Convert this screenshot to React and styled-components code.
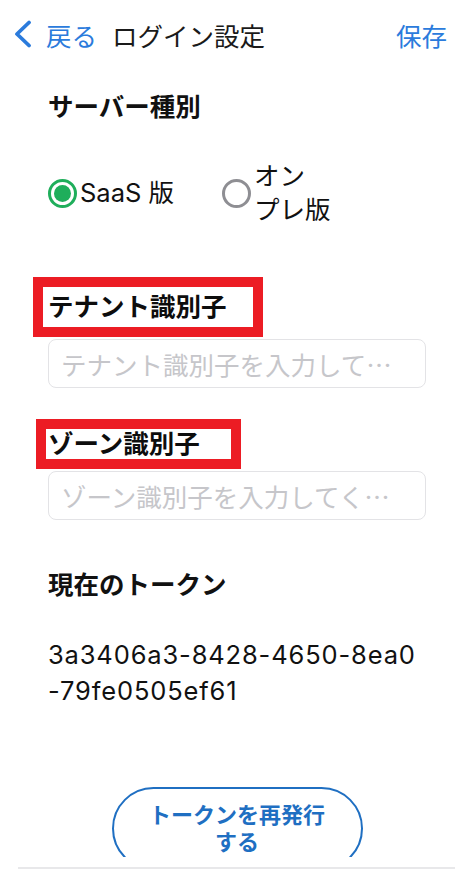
import React from "react";
import styled, { createGlobalStyle } from "styled-components";

const GlobalStyle = createGlobalStyle`
  html, body {
    margin: 0;
    padding: 0;
    background: #ffffff;
  }
  body {
    font-family: Inter, "Noto Sans CJK JP", sans-serif;
    color: #111111;
  }
  * {
    box-sizing: border-box;
  }
`;

const Page = styled.div`
  width: 473px;
  height: 882px;
  display: flex;
  flex-direction: column;
  overflow: hidden;
  background: #ffffff;
`;

const Header = styled.header`
  height: 68px;
  flex: none;
  display: flex;
  align-items: center;
  padding: 0 26px 0 12px;
  font-size: 25.5px;
`;

const BackButton = styled.button`
  display: flex;
  align-items: center;
  gap: 12px;
  padding: 0;
  border: none;
  background: none;
  font: inherit;
  color: #2b7bdc;
  cursor: pointer;
`;

const Title = styled.h1`
  margin: 0 0 0 15px;
  font-size: inherit;
  font-weight: 400;
  color: #1a1a1a;
  flex: 1;
`;

const SaveButton = styled.button`
  padding: 0;
  border: none;
  background: none;
  font: inherit;
  color: #2b7bdc;
  cursor: pointer;
`;

const Content = styled.main`
  flex: none;
  height: 789px;
  overflow: hidden;
  padding: 22px 47px 0 48px;
  display: flex;
  flex-direction: column;
  & > * {
    flex-shrink: 0;
  }
`;

const SectionTitle = styled.h2`
  margin: ${(p) => p.$top || 0}px 0 0;
  font-size: 25.5px;
  line-height: 34px;
  font-weight: 700;
  color: #111111;
`;

const Marked = styled.div`
  align-self: flex-start;
  margin: ${(p) => p.$top}px 0 0 ${(p) => p.$shiftLeft}px;
  padding: ${(p) => p.$padY}px ${(p) => p.$padRight}px ${(p) => p.$padY}px
    ${(p) => p.$padLeft}px;
  border: 10px solid #ec1c24;
  display: flex;
`;

const FieldLabel = styled.label`
  font-size: 25.5px;
  line-height: 30px;
  font-weight: 700;
  color: #0d0d0d;
  white-space: nowrap;
`;

const TextInput = styled.input`
  margin-top: 2px;
  width: 378px;
  height: 49px;
  padding: 0 12px;
  border: 1.5px solid #e3e3e6;
  border-radius: 8px;
  font-family: "Noto Sans CJK JP", sans-serif;
  font-size: 25.5px;
  color: #111111;
  outline: none;
  &::placeholder {
    color: #c6c6ca;
  }
`;

const RadioRow = styled.div`
  margin-top: 35px;
  display: flex;
  align-items: center;
  gap: 48px;
  height: 68px;
`;

const RadioOption = styled.div`
  display: flex;
  align-items: center;
  gap: 3px;
`;

const RadioCircle = styled.span`
  width: 29px;
  height: 29px;
  border-radius: 50%;
  border: 3px solid ${(p) => (p.$checked ? "#1fae5b" : "#8e8e93")};
  display: flex;
  align-items: center;
  justify-content: center;
  flex: none;
  &::after {
    content: "";
    display: ${(p) => (p.$checked ? "block" : "none")};
    width: 17px;
    height: 17px;
    border-radius: 50%;
    background: #1fae5b;
  }
`;

const RadioText = styled.span`
  font-size: 25.5px;
  line-height: 34px;
  color: #111111;
`;

const Token = styled.p`
  margin: 35px 0 0;
  font-size: 25.5px;
  line-height: 36px;
  letter-spacing: 0.85px;
  color: #111111;
`;

const ReissueButton = styled.button`
  margin: 78px auto 0;
  width: 251px;
  height: 83px;
  border: 2.5px solid #1f6fc2;
  border-radius: 42px;
  background: #ffffff;
  color: #1f6fc2;
  font-family: Inter, "Noto Sans CJK JP", sans-serif;
  font-size: 22px;
  font-weight: 700;
  line-height: 27px;
  padding: 0;
  cursor: pointer;
`;

const Footer = styled.footer`
  padding: 10px 18px 0;
`;

const Divider = styled.div`
  height: 2px;
  background: #e8e8ea;
`;

const ChevronLeft = () => (
  <svg width="22" height="28" viewBox="0 0 22 28" fill="none">
    <path
      d="M17 2.5 L5 14 L17 25.5"
      stroke="#2b7bdc"
      strokeWidth="3.8"
      strokeLinecap="round"
      strokeLinejoin="round"
    />
  </svg>
);

export default function App() {
  return (
    <>
      <GlobalStyle />
      <Page>
        <Header>
          <BackButton>
            <ChevronLeft />
            戻る
          </BackButton>
          <Title>ログイン設定</Title>
          <SaveButton>保存</SaveButton>
        </Header>

        <Content>
          <SectionTitle>サーバー種別</SectionTitle>
          <RadioRow>
            <RadioOption>
              <RadioCircle $checked />
              <RadioText>SaaS 版</RadioText>
            </RadioOption>
            <RadioOption>
              <RadioCircle />
              <RadioText>
                オン
                <br />
                プレ版
              </RadioText>
            </RadioOption>
          </RadioRow>

          <Marked $top={50} $shiftLeft={-15} $padY={5} $padLeft={5} $padRight={26}>
            <FieldLabel>テナント識別子</FieldLabel>
          </Marked>
          <TextInput placeholder="テナント識別子を入力して…" />

          <Marked $top={31} $shiftLeft={-12} $padY={0} $padLeft={2} $padRight={31}>
            <FieldLabel>ゾーン識別子</FieldLabel>
          </Marked>
          <TextInput placeholder="ゾーン識別子を入力してく…" />

          <SectionTitle $top={48}>現在のトークン</SectionTitle>
          <Token>
            3a3406a3-8428-4650-8ea0
            <br />
            -79fe0505ef61
          </Token>

          <ReissueButton>
            トークンを再発行
            <br />
            する
          </ReissueButton>
        </Content>

        <Footer>
          <Divider />
        </Footer>
      </Page>
    </>
  );
}
